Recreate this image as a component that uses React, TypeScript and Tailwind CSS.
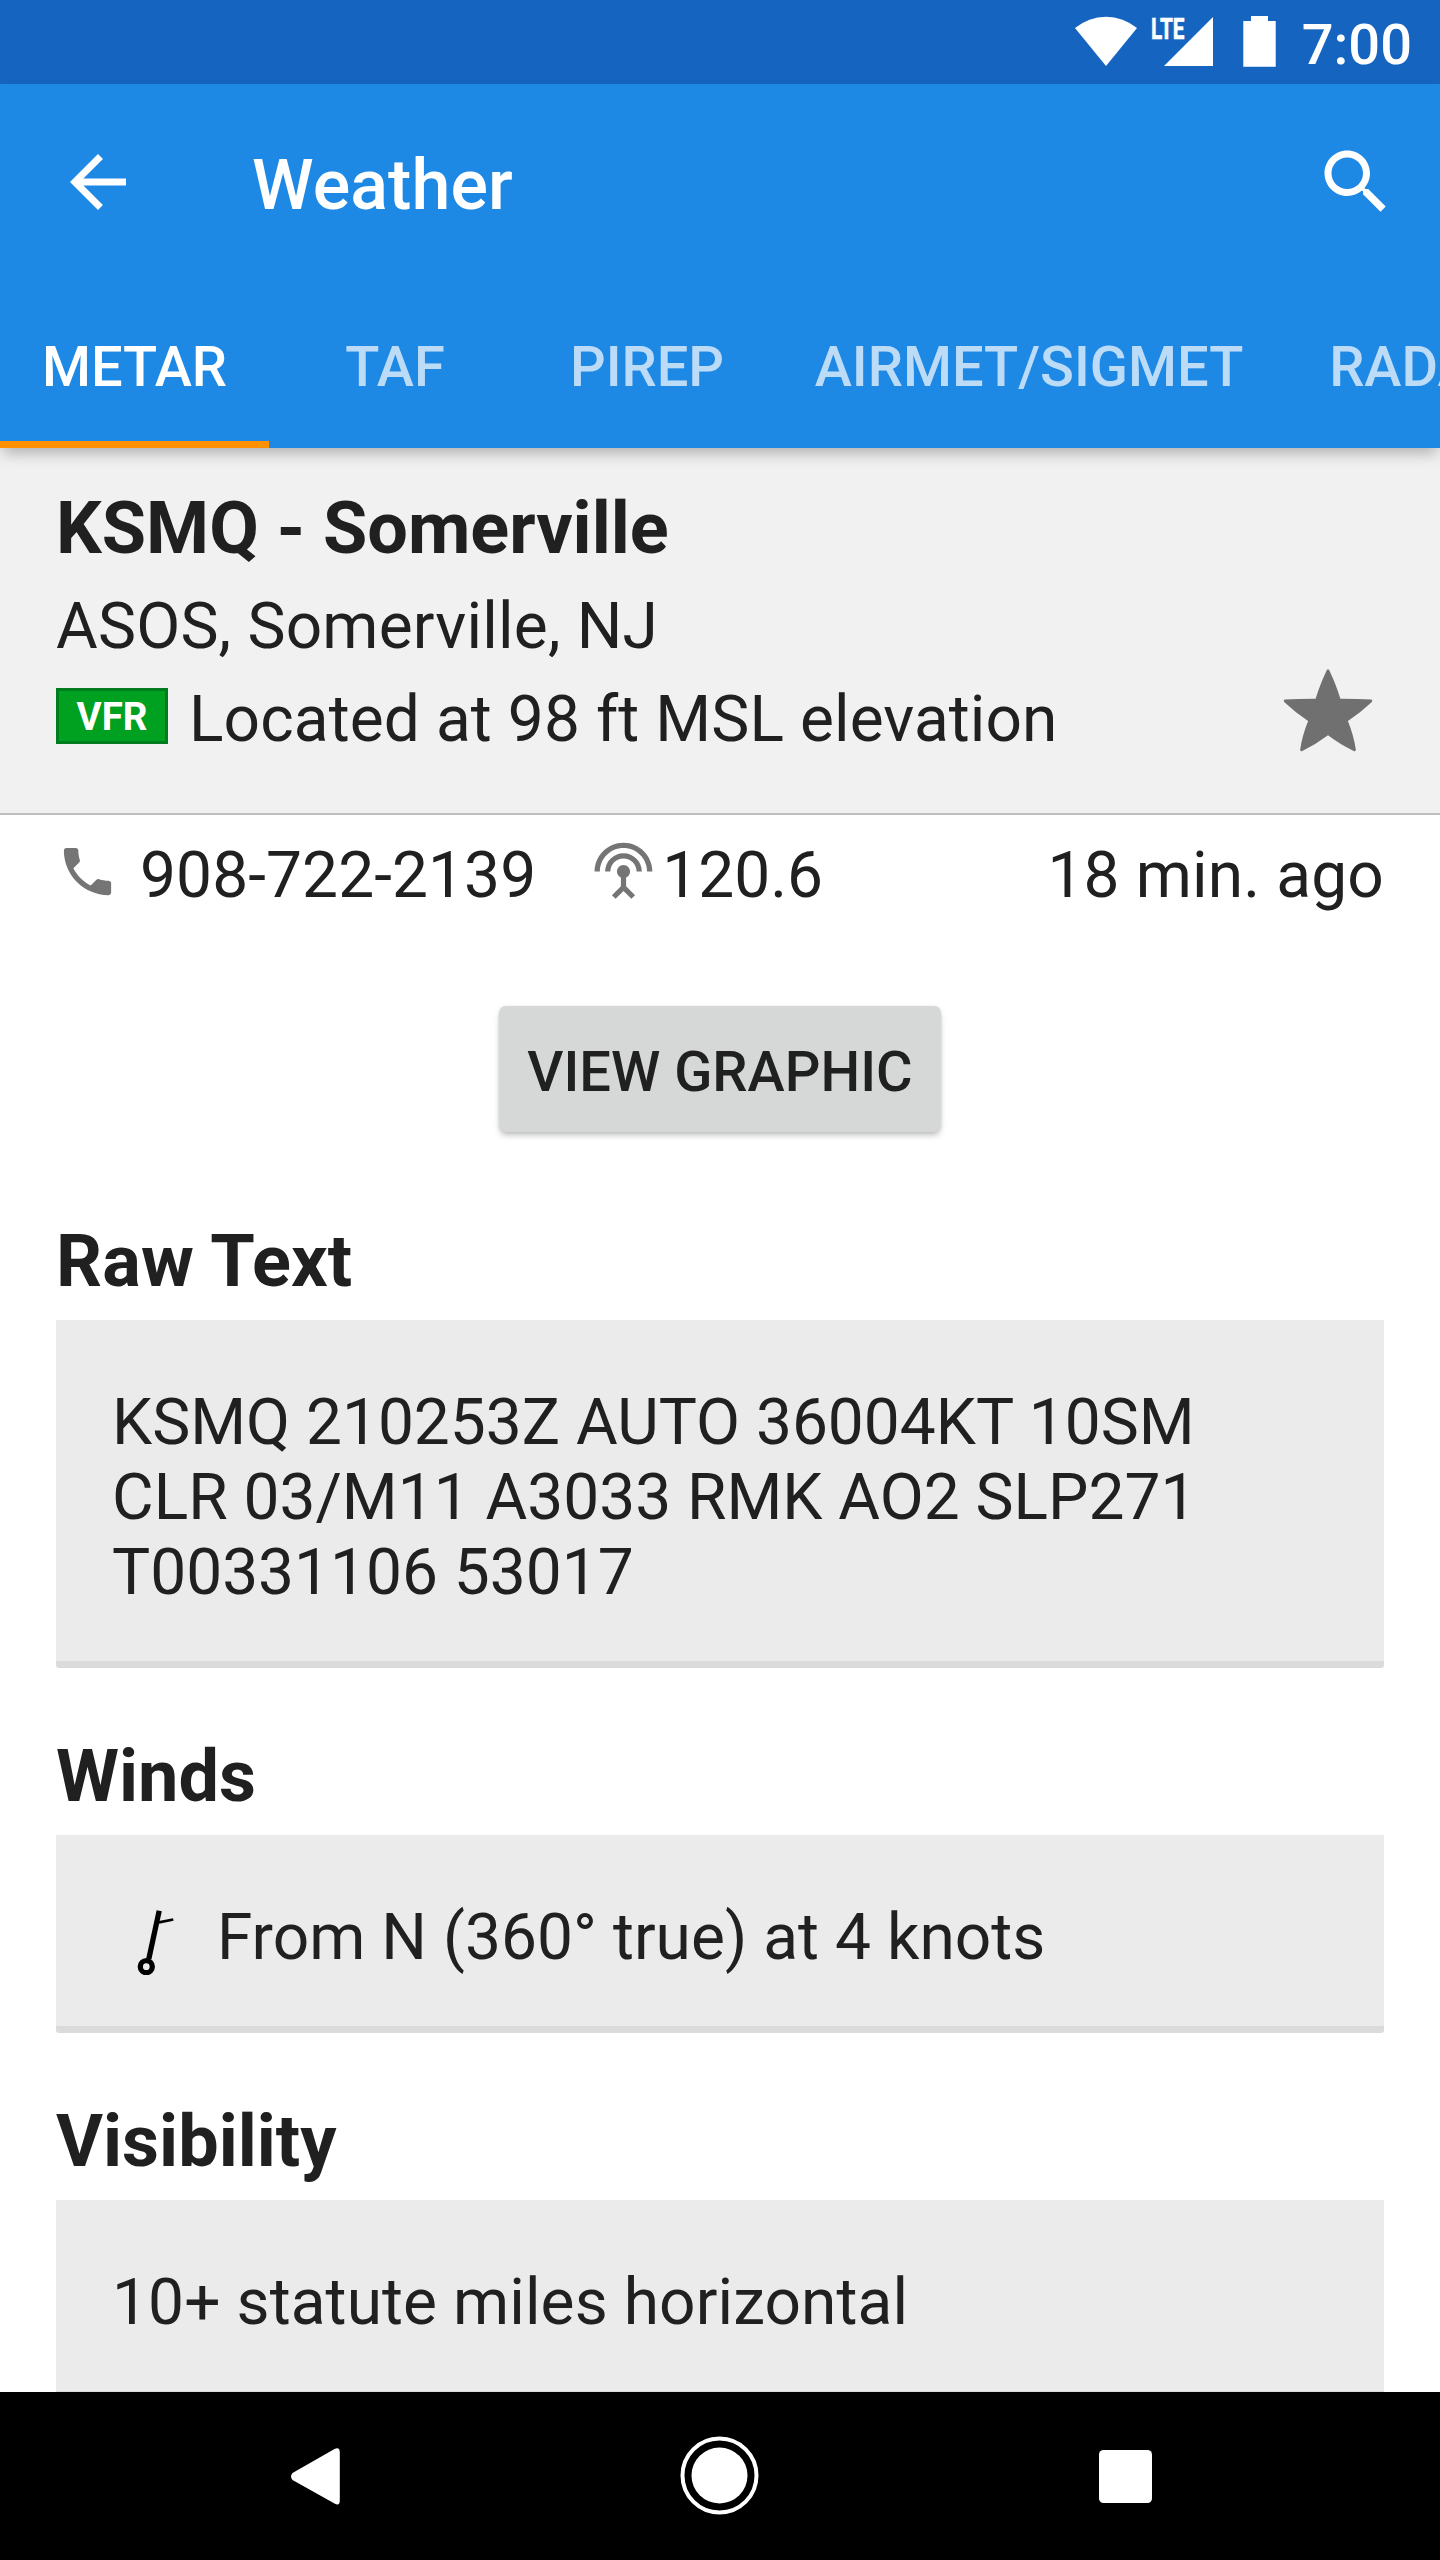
import type { ReactNode } from "react";

function StatusBar() {
  return (
    <div className="flex h-[84px] shrink-0 items-start justify-end bg-[#1565c0] pr-7 text-white">
      <svg className="mr-px h-[84px] w-[226px]" viewBox="1075 0 226 84" fill="currentColor">
        <path d="M1106 66 1075 28A48.5 48.5 0 0 1 1137 28Z" />
        <path d="M1164 66H1213V17Z" />
        <path d="M1251 16H1268V21H1275.7V66.7H1243.3V21H1251Z" />
        <text
          x="1151"
          y="39"
          fontFamily="Roboto"
          fontWeight="700"
          fontSize="30"
          textLength="33.5"
          lengthAdjust="spacingAndGlyphs"
          stroke="currentColor"
          strokeWidth="0.6"
        >
          LTE
        </text>
      </svg>
      <span className="mt-3 text-[56px] leading-[66px] font-medium">7:00</span>
    </div>
  );
}

const tabs = [
  { label: "METAR", width: "w-[269px]", active: true },
  { label: "TAF", width: "w-[252px]" },
  { label: "PIREP", width: "w-[252px]" },
  { label: "AIRMET/SIGMET", width: "w-[512px]" },
  { label: "RADAR", width: "w-[269px]" },
];

function Header() {
  return (
    <header className="z-10 shrink-0 bg-[#1e88e5] text-white shadow-[0_8px_14px_-3px_rgba(0,0,0,0.28)]">
      <div className="flex h-[196px] items-start pr-[42px] pl-14">
        <svg className="mt-14 size-[84px]" viewBox="0 0 24 24" fill="currentColor">
          <path d="M20 11H7.83l5.59-5.59L12 4l-8 8 8 8 1.41-1.41L7.83 13H20v-2z" />
        </svg>
        <h1 className="mt-[60px] ml-28 flex-1 text-[70px] leading-[82px] font-medium tracking-[0.1px]">Weather</h1>
        <svg className="mt-14 size-[84px]" viewBox="0 0 24 24" fill="currentColor">
          <path d="M15.5 14h-.79l-.28-.27C15.41 12.59 16 11.11 16 9.5 16 5.91 13.09 3 9.5 3S3 5.91 3 9.5 5.91 16 9.5 16c1.61 0 3.09-.59 4.23-1.57l.27.28v.79l5 4.99L20.49 19l-4.99-5zm-6 0C7.01 14 5 11.99 5 9.5S7.01 5 9.5 5 14 7.01 14 9.5 11.99 14 9.5 14z" />
        </svg>
      </div>
      <nav className="flex h-[168px] overflow-hidden">
        {tabs.map((tab) => (
          <div
            key={tab.label}
            className={`flex shrink-0 justify-center border-b-[7px] pt-[54px] text-[56px] leading-[66px] font-medium ${tab.width} ${
              tab.active ? "border-[#ff9100] text-white" : "border-transparent text-white/70"
            }`}
          >
            {tab.label}
          </div>
        ))}
      </nav>
    </header>
  );
}

function Station() {
  return (
    <section className="h-[367px] shrink-0 border-b-2 border-[#bfbfbf] bg-[#f1f1f1] px-14 pt-[38px]">
      <h2 className="text-[72px] leading-[85px] font-bold">KSMQ - Somerville</h2>
      <p className="mt-[18px] tracking-[0.2px]">ASOS, Somerville, NJ</p>
      <div className="mt-[18px] flex items-start">
        <span className="mt-1.5 h-14 w-28 border-[3px] border-[#007c1e] bg-[#00a020] pt-[3px] text-center text-[38.5px] leading-[45px] font-bold text-white">
          VFR
        </span>
        <span className="ml-[21px] flex-1 tracking-[0.1px]">Located at 98 ft MSL elevation</span>
        <svg className="-mt-[17px] mr-[9px] h-[90px] w-[94px]" viewBox="1280.6 665 94 90" fill="#707070">
          <path d="M1327.6 669.2Q1328.8 669.2 1329.4 671.5Q1335 683 1340 698.7Q1356 698.6 1370.6 699.6Q1372.6 700 1371.4 702Q1361 712 1347.5 721Q1353.5 736 1355.4 749.5Q1355.5 752 1353.3 751Q1339 744 1327.6 735.3Q1316.2 744 1301.9 751Q1299.7 752 1299.8 749.5Q1301.7 736 1307.7 721Q1294.2 712 1283.8 702Q1282.6 700 1284.6 699.6Q1299.2 698.6 1315.2 698.7Q1320.2 683 1325.8 671.5Q1326.4 669.2 1327.6 669.2Z" />
        </svg>
      </div>
    </section>
  );
}

function Contact() {
  return (
    <section className="mt-[23px] flex h-[75px] shrink-0 items-start px-14">
      <svg className="mt-0.5 size-[63px] text-[#757575]" viewBox="0 0 24 24" fill="currentColor">
        <path d="M6.62 10.79c1.44 2.83 3.76 5.14 6.59 6.59l2.2-2.2c.27-.27.67-.36 1.02-.24 1.12.37 2.33.57 3.57.57.55 0 1 .45 1 1V20c0 .55-.45 1-1 1-9.39 0-17-7.61-17-17 0-.55.45-1 1-1h3.5c.55 0 1 .45 1 1 0 1.25.2 2.45.57 3.57.11.35.03.74-.25 1.02l-2.2 2.2z" />
      </svg>
      <span className="ml-[21px] tracking-[0.1px]">908-722-2139</span>
      <svg className="mt-0.5 ml-14 size-[63px] text-[#757575]" viewBox="0 0 24 24" fill="currentColor">
        <path d="M12 5c-3.87 0-7 3.13-7 7h2c0-2.76 2.24-5 5-5s5 2.24 5 5h2c0-3.87-3.13-7-7-7zm1 9.29c.88-.39 1.5-1.26 1.5-2.29 0-1.38-1.12-2.5-2.5-2.5S9.5 10.62 9.5 12c0 1.02.62 1.9 1.5 2.29v3.3L7.59 21 9 22.41l3-3 3 3L16.41 21 13 17.59v-3.3zM12 1C5.93 1 1 5.93 1 12h2c0-4.97 4.03-9 9-9s9 4.03 9 9h2c0-6.07-4.93-11-11-11z" />
      </svg>
      <span className="ml-[7px]">120.6</span>
      <span className="ml-auto tracking-[0.15px]">18 min. ago</span>
    </section>
  );
}

function Card({ title, first, children }: { title: string; first?: boolean; children: ReactNode }) {
  return (
    <section className={`mx-14 shrink-0 ${first ? "mt-[87px] tracking-[0.2px]" : "mt-[66px]"}`}>
      <h3 className="text-[72px] leading-[85px] font-bold">{title}</h3>
      <div className="mt-4 rounded-b-[3px] border-b-[7px] border-[#dbdbdb] bg-[#ebebeb] px-14 pt-[65px] pb-[51px] tracking-normal">
        {children}
      </div>
    </section>
  );
}

function NavigationBar() {
  return (
    <footer className="flex h-[168px] shrink-0 bg-black text-white">
      <svg className="h-full w-full" viewBox="0 2392 1440 168" fill="currentColor">
        <path d="M292.5 2473 334.5 2449Q339.8 2446.5 339.8 2452.5V2500.5Q339.8 2506.5 334.5 2503.5L292.5 2480Q289.5 2476.5 292.5 2473Z" />
        <circle cx="719.5" cy="2475.5" r="28" />
        <circle cx="719.5" cy="2475.5" r="37" fill="none" stroke="currentColor" strokeWidth="4" />
        <rect x="1099" y="2450" width="53" height="53" rx="4.5" />
      </svg>
    </footer>
  );
}

export default function App() {
  return (
    <div className="flex h-[2560px] w-[1440px] flex-col overflow-hidden bg-white font-[Roboto,sans-serif] text-[64px] leading-[75px] text-[#202020]">
      <StatusBar />
      <Header />
      <main className="flex h-[1944px] shrink-0 flex-col overflow-hidden">
        <Station />
        <Contact />
        <button className="mt-[93px] h-[126px] w-[442px] shrink-0 self-center rounded-[7px] bg-[#d6d7d7] pt-1.5 text-[56px] leading-[66px] font-medium shadow-[0_4px_6px_-1px_rgba(0,0,0,0.26),0_0_3px_rgba(0,0,0,0.08)]">
          VIEW GRAPHIC
        </button>
        <Card title="Raw Text" first>
          <p className="whitespace-nowrap">KSMQ 210253Z AUTO 36004KT 10SM</p>
          <p className="whitespace-nowrap">CLR 03/M11 A3033 RMK AO2 SLP271</p>
          <p className="whitespace-nowrap">T00331106 53017</p>
        </Card>
        <Card title="Winds">
          <div className="flex h-[75px]">
            <svg className="h-[75px] w-[104px]" viewBox="112 1900 104 75" fill="none" stroke="#000">
              <path d="M159.2 1910.7 148.8 1959" strokeWidth="5.3" />
              <path d="M159 1922.3 173.3 1919.5" strokeWidth="2.8" />
              <circle cx="146.3" cy="1966.7" r="6" strokeWidth="5.3" />
            </svg>
            <span className="ml-px tracking-[0.05px]">From N (360° true) at 4 knots</span>
          </div>
        </Card>
        <Card title="Visibility">
          <p className="tracking-[0.1px]">10+ statute miles horizontal</p>
        </Card>
      </main>
      <NavigationBar />
    </div>
  );
}
